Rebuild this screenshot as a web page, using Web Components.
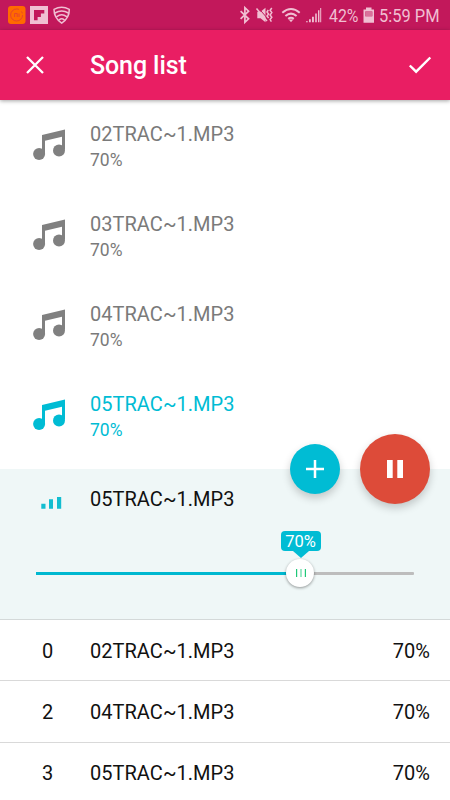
<!DOCTYPE html>
<html lang="en">
<head>
<meta charset="utf-8">
<title>Song list</title>
<style>
html,body{margin:0;padding:0;background:#fff}
body{width:450px;height:800px;overflow:hidden;font-family:Roboto,"Liberation Sans",sans-serif}
</style>
</head>
<body>
<song-app></song-app>
<script>
function define(name, html) {
  const t = document.createElement('template');
  t.innerHTML = html;
  customElements.define(name, class extends HTMLElement {
    constructor() {
      super();
      this.attachShadow({mode: 'open'}).appendChild(t.content.cloneNode(true));
    }
  });
}

define('status-bar', `
<style>
:host{display:block;height:30px;background:#c2185b}
svg{display:block}
text{font-family:Roboto,"Liberation Sans",sans-serif;font-size:19px;fill:#f0bfd2}
</style>
<svg width="450" height="30" viewBox="0 0 450 30">
  <rect x="8" y="6" width="17.5" height="18" rx="3" fill="#ff6a00"/>
  <circle cx="16.6" cy="15" r="6" fill="none" stroke="#e8452a" stroke-width="1" stroke-dasharray="30 3 2 3"/>
  <path d="M14.600 17v-3.500h2.600v3.500M19 13.500v3.500" fill="none" stroke="#e8452a" stroke-width="1"/>
  <path fill="#f0bfd2" fill-rule="evenodd" d="M30 6h18v18H30zM34 10v10.300h3.600v-3.300h3.300v-3.500h3.400V10z"/>
  <g fill="none" stroke="#f0bfd2" stroke-width="1.500" stroke-linecap="round" stroke-linejoin="round">
    <path d="M54 9.300Q61.700 5 69.300 9.300Q69.500 18 61.700 23.200Q53.900 18 54 9.300z"/>
    <path d="M55 13Q61.700 8.800 68.400 13M56.800 16.600Q61.700 12.800 66.600 16.600M59.200 19.800Q61.700 17.800 64.200 19.800"/>
  </g>
  <path d="M240.600 11.200l8 7.600-3.700 3.500V7.700l3.700 3.500-8 7.600" fill="none" stroke="#f0bfd2" stroke-width="1.700"/>
  <path fill="#f0bfd2" d="M257.300 11.700h3.200l5-4v14.600l-5-4h-3.200z"/>
  <path d="M258 7.500l10 11.500" stroke="#c2185b" stroke-width="1"/>
  <path d="M256.500 8.500l10.500 12.500" stroke="#f0bfd2" stroke-width="1.500"/>
  <path d="M268.300 10l-1.300 2 1.600 2-1.600 2 1.600 2M271.800 8l-1.700 2.300 1.700 2.300-1.700 2.400 1.700 2.300-1.700 2.300 1.300 2" fill="none" stroke="#f0bfd2" stroke-width="1.500"/>
  <g fill="none" stroke="#f0bfd2" stroke-width="2">
    <path d="M282.300 12.700Q291 5.200 299.700 12.700M285.400 16Q291 11.300 296.600 16M288.200 18.900Q291 16.700 293.800 18.900"/>
  </g>
  <path d="M288.700 19.500h4.600L291 22.200z" fill="#f0bfd2"/>
  <path fill="#f0bfd2" d="M306 21.200h1.800v1H306zM309 19.200h1.800v3H309zM312 16.700h1.900v5.500H312zM315.200 13.400h1.600v8.800h-1.600zM318 10.200h1.400v12H318zM320.200 8h1v14.200h-1z" />
  <text x="329" y="22" textLength="29.500" lengthAdjust="spacingAndGlyphs">42%</text>
  <path fill="#f0bfd2" fill-rule="evenodd" d="M366 7.500h5.500v2h2.500V22.800h-10.500V9.500h2.500zM365.300 11.500v4.800h7v-4.800z"/>
  <path fill="#d9719a" d="M365.300 11.500h7v4.800h-7z"/>
  <text x="379" y="22" textLength="60.500" lengthAdjust="spacingAndGlyphs">5:59 PM</text>
</svg>`);

define('top-bar', `
<style>
:host{display:flex;align-items:center;height:70px;background:#e91e63;color:#fff;box-shadow:0 1px 4px rgba(0,0,0,.36);position:relative;box-sizing:border-box;padding:0 18px 0 26px}
h1{margin:2px 0 0 46px;flex:1;font-size:25px;line-height:30px;font-weight:500;letter-spacing:-.1px}
svg{display:block}
</style>
<svg width="18" height="18" viewBox="0 0 18 18"><path d="M1 1l16 16M17 1L1 17" stroke="#fff" stroke-width="2.300"/></svg>
<h1><slot></slot></h1>
<svg width="24" height="18" viewBox="0 0 24 18"><path d="M1.800 9.500l6.300 6.200L22.300 1.500" fill="none" stroke="#fff" stroke-width="2.400"/></svg>`);

define('song-item', `
<style>
:host{display:flex;height:90px;color:#7a7a7a;--icon:#808080}
:host([active]){color:#00bcd4;--icon:#00bcd4}
svg{display:block;margin:28px 24px 0 32px;fill:var(--icon)}
.t{font-size:20px;line-height:24px;margin-top:22px;letter-spacing:.03px}
.s{font-size:17.500px;line-height:20px;margin-top:4px}
</style>
<svg width="34" height="34" viewBox="0 0 34 34"><path d="M10 7L33 1.600V21.500L30 22.500V8.800L13 12.800V26H10z"/><circle cx="7.100" cy="26.100" r="6"/><circle cx="27" cy="22.600" r="6"/></svg>
<div><div class="t"><slot></slot></div><div class="s"><slot name="volume"></slot></div></div>`);

define('volume-slider', `
<style>
:host{display:block;position:relative;margin:0 36px;height:3px}
.track{display:flex;height:2.500px;background:#bdbdbd;border-radius:1px}
.fill{width:70%;background:#00b8d0}
.thumb{position:absolute;left:250px;top:-13px;width:28px;height:28px;border-radius:50%;background:#fff;box-shadow:0 1px 3px rgba(0,0,0,.4);display:flex;align-items:center;justify-content:center}
.tip{position:absolute;left:244.500px;top:-41px;width:40px;height:20px;border-radius:4px;background:#00bcd4;color:#fff;font-size:16.500px;line-height:22px;text-align:center}
.tip::after{content:"";position:absolute;left:12px;top:20px;border:8px solid transparent;border-top:7.500px solid #00bcd4;border-bottom:0}
</style>
<div class="track"><div class="fill"></div></div>
<div class="tip"><slot></slot></div>
<div class="thumb"><svg width="12" height="8" viewBox="0 0 12 8"><path d="M2 0h1.200v8H2zM10.800 0H12v8h-1.200z" fill="#1fc878"/><path d="M6 0h2v8H6z" fill="#9ce8c6"/></svg></div>`);

define('round-button', `
<style>
:host{display:flex;align-items:center;justify-content:center;border-radius:50%;width:var(--size);height:var(--size);background:var(--fill);box-shadow:0 4px 9px rgba(0,0,0,.2)}
</style><slot></slot>`);

define('now-playing', `
<style>
:host{display:block;position:relative;height:150px;background:#eff7f7;border-bottom:1px solid #d4d9d9}
.head{display:flex;height:60px;align-items:center}
.head svg{margin:7px 28px 0 41px;display:block}
.name{font-size:20px;line-height:24px;letter-spacing:.03px;color:#111}
volume-slider{margin-top:43px}
.fabs{position:absolute;right:20px;top:-35px;display:flex;align-items:center;gap:20px}
.add{--size:50px;--fill:#00bcd4}
.pause{--size:70px;--fill:#dd4b39}
</style>
<div class="head"><svg width="21" height="14" viewBox="0 0 21 14" fill="#12bdd0"><path d="M.3 7.800h4.200v5H.3zM8 3.300h4v9.500H8zM16 1h4.200v11.800H16z"/></svg>
<div class="name"><slot></slot></div></div>
<volume-slider><slot name="volume"></slot></volume-slider>
<div class="fabs">
<round-button class="add"><svg width="18" height="18" viewBox="0 0 18 18"><path d="M9 0v18M0 9h18" stroke="#fff" stroke-width="2.500"/></svg></round-button>
<round-button class="pause"><svg width="16" height="18" viewBox="0 0 16 18"><path d="M0 0h5.700v18H0zM10.300 0H16v18h-5.700z" fill="#fff"/></svg></round-button>
</div>`);

define('queue-row', `
<style>
:host{display:flex;align-items:center;height:61.250px;box-sizing:border-box;border-bottom:1px solid #d9d9d9;padding:1px 20px 0 42px;font-size:20px;line-height:24px;color:#111}
.n{width:48px}.t{flex:1;letter-spacing:.03px}
</style>
<span class="n"><slot name="index"></slot></span><span class="t"><slot></slot></span><span><slot name="volume"></slot></span>`);

define('song-app', `
<style>:host{display:block;width:450px;height:800px;overflow:hidden}
.list{height:369px;overflow:hidden}</style>
<status-bar></status-bar>
<top-bar>Song list</top-bar>
<div class="list">
<song-item>02TRAC~1.MP3<span slot="volume">70%</span></song-item>
<song-item>03TRAC~1.MP3<span slot="volume">70%</span></song-item>
<song-item>04TRAC~1.MP3<span slot="volume">70%</span></song-item>
<song-item active>05TRAC~1.MP3<span slot="volume">70%</span></song-item>
</div>
<now-playing>05TRAC~1.MP3<span slot="volume">70%</span></now-playing>
<queue-row><span slot="index">0</span>02TRAC~1.MP3<span slot="volume">70%</span></queue-row>
<queue-row><span slot="index">2</span>04TRAC~1.MP3<span slot="volume">70%</span></queue-row>
<queue-row><span slot="index">3</span>05TRAC~1.MP3<span slot="volume">70%</span></queue-row>`);
</script>
</body>
</html>
